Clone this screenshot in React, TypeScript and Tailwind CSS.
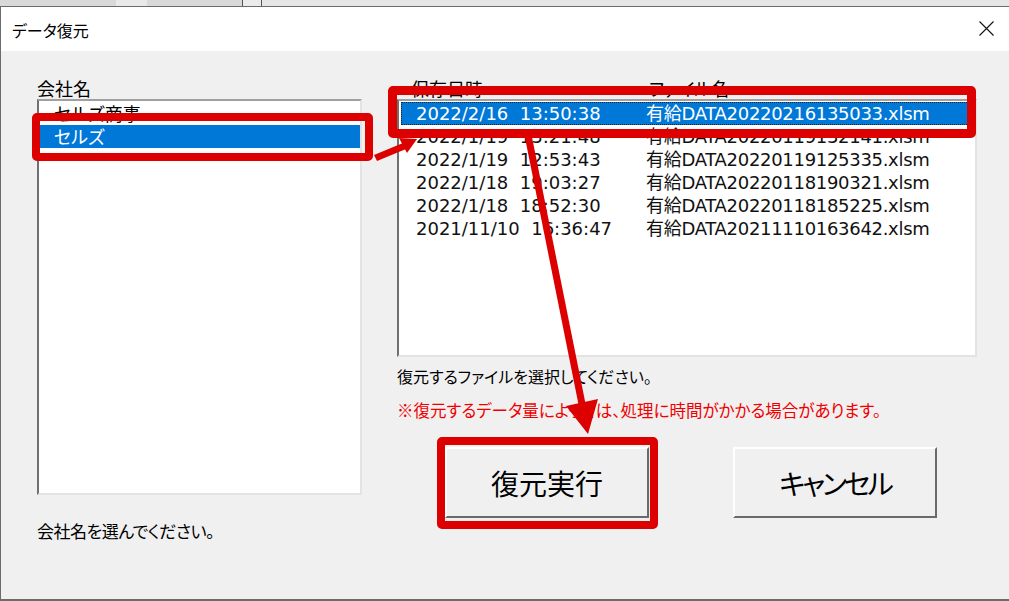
import React from "react";

type FileRow = { savedAt: string; fileName: string };

const companies = ["セルズ商事", "セルズ"];

const files: FileRow[] = [
  { savedAt: "2022/2/16  13:50:38", fileName: "有給DATA20220216135033.xlsm" },
  { savedAt: "2022/1/19  13:21:48", fileName: "有給DATA20220119132141.xlsm" },
  { savedAt: "2022/1/19  12:53:43", fileName: "有給DATA20220119125335.xlsm" },
  { savedAt: "2022/1/18  19:03:27", fileName: "有給DATA20220118190321.xlsm" },
  { savedAt: "2022/1/18  18:52:30", fileName: "有給DATA20220118185225.xlsm" },
  { savedAt: "2021/11/10  16:36:47", fileName: "有給DATA20211110163642.xlsm" },
];

const ListBox = ({
  className,
  children,
}: {
  className: string;
  children: React.ReactNode;
}) => (
  <div
    className={`bg-white border-2 border-t-[#a0a0a0] border-l-[#707070] border-r-[#e3e3e3] border-b-[#e3e3e3] ${className}`}
  >
    {children}
  </div>
);

const WinButton = ({ label, tight }: { label: string; tight?: boolean }) => (
  <button
    className={`w-[204px] h-[71px] bg-[#f0f0f0] border-2 border-t-white border-l-white border-r-[#6a6a6a] border-b-[#6a6a6a] text-[28px] text-black leading-none ${
      tight ? "tracking-[-3px]" : ""
    }`}
  >
    {label}
  </button>
);

const App = () => {
  return (
    <div className="relative w-[1009px] h-[601px] overflow-hidden bg-[#f0f0f0] font-['Noto_Sans_CJK_JP',sans-serif] [font-feature-settings:'palt'] text-black">
      {/* spreadsheet behind the dialog */}
      <div className="flex h-[6px] bg-[#e4e4e4]">
        <div className="w-[116px] bg-[#d9d9d9]" />
        <div className="w-[31px] bg-[#e9e9e9]" />
        <div className="w-[96px] bg-[#d9d9d9] border-r border-[#555]" />
        <div className="w-[19px] bg-[#ebebeb] border-r border-[#555]" />
        <div className="flex-1 bg-[#e6e6e6]" />
      </div>

      <div className="flex flex-col h-[595px] border-t border-l border-b-2 border-[#6b6b6b]">
        <div className="flex items-center justify-between h-[44px] bg-white pl-[11px] pr-[15px]">
          <span className="text-[16px] leading-none pt-[2px]">データ復元</span>
          <svg width="15" height="15" viewBox="0 0 15 15" className="mb-[1px]">
            <path d="M0.5 0.5 L14.5 14.5 M14.5 0.5 L0.5 14.5" stroke="#111" strokeWidth="1.1" />
          </svg>
        </div>

        <div className="flex flex-1 pl-[36px] pt-[26px]">
          {/* company list */}
          <div className="flex flex-col w-[325px]">
            <div className="h-[22px] text-[18px] leading-[22px]">会社名</div>
            <ListBox className="h-[396px] pt-[1px]">
              {companies.map((name, i) => (
                <div
                  key={name}
                  className={`h-[23px] pl-[15px] text-[18px] leading-[23px] ${
                    i === 1 ? "bg-[#0078d7] text-white" : ""
                  }`}
                >
                  {name}
                </div>
              ))}
            </ListBox>
            <div className="mt-[26px] text-[17px] leading-[20px] tracking-[-0.5px]">会社名を選んでください。</div>
          </div>

          {/* file list */}
          <div className="flex flex-col w-[580px] ml-[35px]">
            <div className="flex h-[22px] text-[18px] leading-[22px]">
              <span className="w-[252px] pl-[14px]">保存日時</span>
              <span>ファイル名</span>
            </div>
            <ListBox className="h-[258px] pt-[1px] px-[2px]">
              {files.map((f, i) => (
                <div
                  key={f.fileName}
                  className={`flex h-[23px] pl-[15px] text-[18px] leading-[23px] font-['DejaVu_Sans','Noto_Sans_CJK_JP',sans-serif] [font-feature-settings:normal] ${
                    i === 0
                      ? "bg-[#0078d7] text-white outline-1 outline-dotted outline-[#222] -outline-offset-1 mr-[4px]"
                      : "text-[#111]"
                  }`}
                >
                  <span className="w-[230px] whitespace-pre">{f.savedAt}</span>
                  <span className="tracking-[-0.3px]">{f.fileName}</span>
                </div>
              ))}
            </ListBox>
            <div className="mt-[9px] text-[16px] leading-[20px]">
              復元するファイルを選択してください。
            </div>
            <div className="mt-[14px] text-[16.5px] leading-[20px] text-[#f00000]">
              ※復元するデータ量によっては、処理に時間がかかる場合があります。
            </div>
            <div className="flex mt-[27px] pl-[48px] gap-[84px]">
              <WinButton label="復元実行" />
              <WinButton label="キャンセル" tight />
            </div>
          </div>
        </div>
      </div>

      {/* red annotations drawn over the screenshot */}
      <div className="absolute left-[32px] top-[113px] w-[341px] h-[48px] border-8 border-[#dc0000] rounded-[5px]" />
      <div className="absolute left-[388px] top-[86px] w-[588px] h-[52px] border-[9px] border-[#dc0000] rounded-[5px]" />
      <div className="absolute left-[437px] top-[437px] w-[221px] h-[92px] border-8 border-[#dc0000] rounded-[5px]" />
      <svg className="absolute inset-0 pointer-events-none" width="1009" height="601" viewBox="0 0 1009 601">
        <polygon points="374,155 403,143 406,149 377,161" fill="#dc0000" />
        <polygon points="417,139 399,138 407,153" fill="#dc0000" />
        <line x1="528" y1="135" x2="582" y2="404" stroke="#dc0000" strokeWidth="7" />
        <polygon points="588,434 566,406 598,399" fill="#dc0000" />
      </svg>
    </div>
  );
};

export default App;
